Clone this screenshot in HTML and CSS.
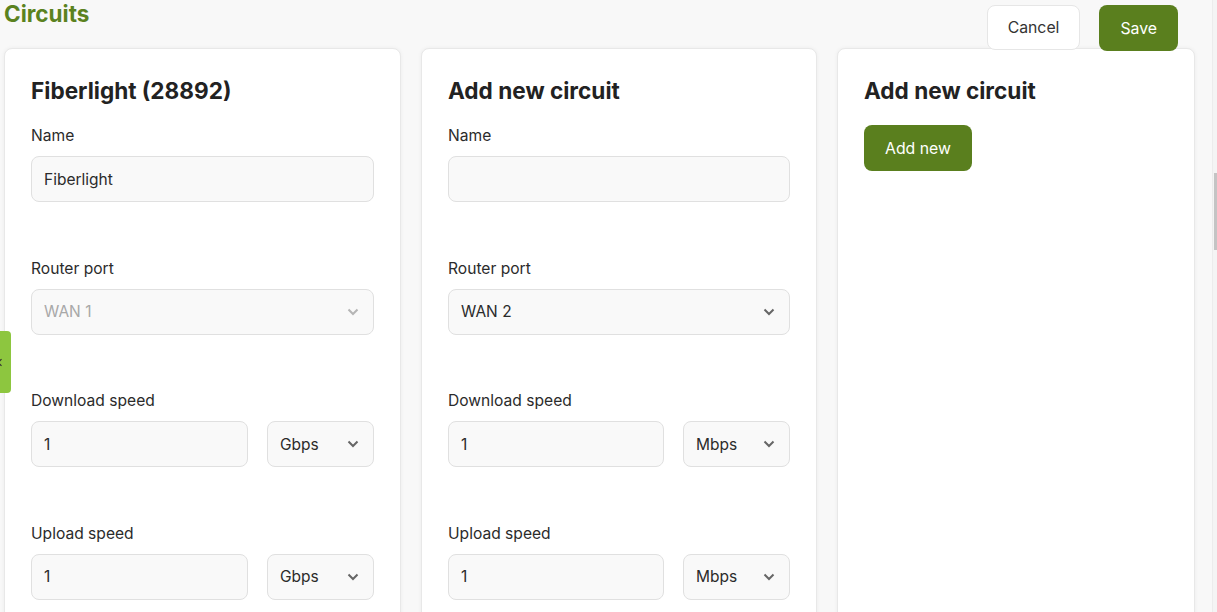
FILE: index.html
```html
<!DOCTYPE html>
<html lang="en">
<head>
    <meta charset="UTF-8">
    <meta name="viewport" content="width=device-width, initial-scale=1.0">
    <title>Circuits</title>
    <link rel="stylesheet" href="styles.css">
</head>
<body>

<div class="page">
    <header class="page-header">
        <h1>Circuits</h1>
        <div class="actions">
            <button class="btn btn-light">Cancel</button>
            <button class="btn btn-green">Save</button>
        </div>
    </header>

    <section class="circuits">
        <!-- Existing circuit -->
        <div class="card">
            <h2>Fiberlight (28892)</h2>
            <div class="field">
                <label>Name</label>
                <input class="input" type="text" value="Fiberlight">
            </div>
            <div class="field">
                <label>Router port</label>
                <div class="select-wrap">
                    <select class="input" disabled><option>WAN 1</option></select>
                    <svg class="chevron" viewBox="0 0 12 8"><path d="M1.5 1.5 6 6l4.5-4.5"/></svg>
                </div>
            </div>
            <div class="field">
                <label>Download speed</label>
                <div class="speed-row">
                    <input class="input" type="text" value="1">
                    <div class="select-wrap">
                        <select class="input"><option>Gbps</option></select>
                        <svg class="chevron" viewBox="0 0 12 8"><path d="M1.5 1.5 6 6l4.5-4.5"/></svg>
                    </div>
                </div>
            </div>
            <div class="field">
                <label>Upload speed</label>
                <div class="speed-row">
                    <input class="input" type="text" value="1">
                    <div class="select-wrap">
                        <select class="input"><option>Gbps</option></select>
                        <svg class="chevron" viewBox="0 0 12 8"><path d="M1.5 1.5 6 6l4.5-4.5"/></svg>
                    </div>
                </div>
            </div>
        </div>

        <!-- New circuit form -->
        <div class="card">
            <h2>Add new circuit</h2>
            <div class="field">
                <label>Name</label>
                <input class="input" type="text" value="">
            </div>
            <div class="field">
                <label>Router port</label>
                <div class="select-wrap">
                    <select class="input"><option>WAN 2</option></select>
                    <svg class="chevron" viewBox="0 0 12 8"><path d="M1.5 1.5 6 6l4.5-4.5"/></svg>
                </div>
            </div>
            <div class="field">
                <label>Download speed</label>
                <div class="speed-row">
                    <input class="input" type="text" value="1">
                    <div class="select-wrap">
                        <select class="input"><option>Mbps</option></select>
                        <svg class="chevron" viewBox="0 0 12 8"><path d="M1.5 1.5 6 6l4.5-4.5"/></svg>
                    </div>
                </div>
            </div>
            <div class="field">
                <label>Upload speed</label>
                <div class="speed-row">
                    <input class="input" type="text" value="1">
                    <div class="select-wrap">
                        <select class="input"><option>Mbps</option></select>
                        <svg class="chevron" viewBox="0 0 12 8"><path d="M1.5 1.5 6 6l4.5-4.5"/></svg>
                    </div>
                </div>
            </div>
        </div>

        <!-- Add another -->
        <div class="card card-narrow">
            <h2>Add new circuit</h2>
            <button class="btn btn-green">Add new</button>
        </div>
    </section>
</div>

<!-- Collapsed side panel tab -->
<div class="side-tab">
    <svg viewBox="0 0 8 12"><path d="M6 1.5 1.5 6 6 10.5"/></svg>
</div>

<div class="scroll-track"><div class="scroll-thumb"></div></div>

</body>
</html>
```

FILE: styles.css
```css
body {
    margin: 0;
    background-color: #f8f8f8;
    font-family: Inter, "Noto Sans", sans-serif;
    color: #222;
    overflow: hidden;
}
.page {
    padding: 0 22px 0 4px;
    position: relative;
}
.page-header {
    height: 48px;
}
.page-header h1 {
    margin: 0;
    font-size: 22.5px;
    line-height: 28px;
    font-weight: 700;
    color: #5b821f;
}
.actions {
    position: absolute;
    top: 5px;
    right: 39px;
    display: flex;
    gap: 19px;
    z-index: 2;
}
.btn {
    height: 46px;
    padding: 0 21px;
    border-radius: 8px;
    font-family: inherit;
    font-size: 15.8px;
    cursor: pointer;
}
.btn-light {
    background-color: #ffffff;
    border: 1px solid #e6e6e6;
    color: #333;
    height: 45px;
    padding: 0 20px;
}
.btn-green {
    background-color: #5a7f1e;
    border: none;
    color: #ffffff;
}
.circuits {
    display: grid;
    grid-template-columns: 397px 396px 1fr;
    gap: 20px;
}
.card {
    background-color: #ffffff;
    border: 1px solid #e8e8e8;
    border-radius: 8px;
    box-shadow: 0 0 4px rgba(0, 0, 0, 0.05);
    padding: 27px 26px;
    min-height: 600px;
}
.card h2 {
    margin: 0 0 19px;
    font-size: 22.6px;
    line-height: 30px;
    font-weight: 700;
    color: #222;
}
.field {
    margin-bottom: 55.5px;
}
.field label {
    display: block;
    font-size: 15.6px;
    line-height: 21px;
    margin-bottom: 10px;
    color: #2b2b2b;
}
.input {
    display: block;
    width: 100%;
    box-sizing: border-box;
    height: 46px;
    padding: 0 12px;
    background-color: #f9f9f9;
    border: 1px solid #e0e0e0;
    border-radius: 8px;
    font-family: inherit;
    font-size: 15.5px;
    color: #2b2b2b;
    outline: none;
}
select.input {
    appearance: none;
    -webkit-appearance: none;
}
select.input:disabled {
    color: #a8a8a8;
    opacity: 1;
}
.select-wrap {
    position: relative;
}
.chevron {
    position: absolute;
    right: 15px;
    top: 19px;
    width: 12px;
    height: 8px;
    fill: none;
    stroke: #666;
    stroke-width: 2;
    pointer-events: none;
}
select.input:disabled + .chevron {
    stroke: #b5b5b5;
}
.speed-row {
    display: grid;
    grid-template-columns: 1fr 107px;
    gap: 19px;
}
.side-tab {
    position: fixed;
    left: 0;
    top: 331px;
    width: 11px;
    height: 62px;
    background-color: #8dc63f;
    border-radius: 0 4px 4px 0;
    overflow: hidden;
}
.side-tab svg {
    position: absolute;
    left: -3px;
    top: 27px;
    width: 6px;
    height: 9px;
    fill: none;
    stroke: #333;
    stroke-width: 1.6;
}
.scroll-track {
    position: fixed;
    top: 0;
    right: 0;
    width: 4px;
    height: 100%;
    background-color: #f4f4f4;
    border-left: 1px solid #ececec;
}
.scroll-thumb {
    margin-top: 173px;
    height: 77px;
    width: 3px;
    margin-left: 1px;
    background-color: #c4c4c4;
}
```
